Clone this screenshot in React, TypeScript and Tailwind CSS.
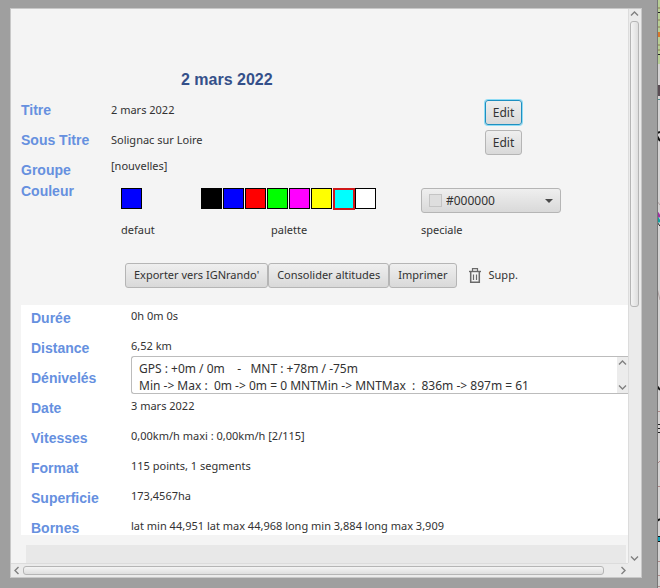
import React, { useState } from "react";

const PALETTE = ["#000000", "#0000ff", "#ff0000", "#00ff00", "#ff00ff", "#ffff00", "#00ffff", "#ffffff"];

const BUTTON =
  "h-[25px] rounded-[3px] border border-[#b5b5b5] bg-gradient-to-b from-[#efefef] to-[#d9d9d9] whitespace-nowrap";

const STATS = [
  { label: "Durée", value: "0h 0m 0s" },
  { label: "Distance", value: "6,52 km" },
  { label: "Dénivelés", value: "" },
  { label: "Date", value: "3 mars 2022" },
  { label: "Vitesses", value: "0,00km/h maxi : 0,00km/h [2/115]" },
  { label: "Format", value: "115 points, 1 segments" },
  { label: "Superficie", value: "173,4567ha" },
  { label: "Bornes", value: "lat min 44,951 lat max 44,968 long min 3,884 long max 3,909" },
];

const DENIVELES =
  "GPS : +0m / 0m    -   MNT : +78m / -75m\nMin -> Max :  0m -> 0m = 0 MNTMin -> MNTMax  :  836m -> 897m = 61";

function Chevron({ d }: { d: string }) {
  return (
    <svg width="9" height="9" viewBox="0 0 9 9" fill="none" stroke="#808080" strokeWidth="1.4">
      <path d={d} />
    </svg>
  );
}

const UP = "M1 6.5L4.5 3L8 6.5";
const DOWN = "M1 2.5L4.5 6L8 2.5";
const LEFT = "M6.5 1L3 4.5L6.5 8";
const RIGHT = "M2.5 1L6 4.5L2.5 8";

function FieldLabel({ children, htmlFor }: { children: React.ReactNode; htmlFor?: string }) {
  const cls = "block font-['Liberation_Sans',sans-serif] text-sm leading-5 font-bold text-[#6690df]";
  return htmlFor ? (
    <label htmlFor={htmlFor} className={cls}>{children}</label>
  ) : (
    <span className={cls}>{children}</span>
  );
}

function TrashIcon() {
  return (
    <svg width="12" height="16" viewBox="0 0 12 16" fill="none" stroke="#6a6a6a">
      <path d="M0 3.5H12" strokeWidth="1.4" />
      <path d="M3.5 3V0.7H8.5V3" strokeWidth="1.2" />
      <path d="M1.7 4V14.3H10.3V4" strokeWidth="1.5" />
      <path d="M4.5 6.5V12M7.5 6.5V12" strokeWidth="1.2" />
    </svg>
  );
}

// Sliver of the map left visible beside the panel
function MapEdge() {
  return (
    <svg width="3" height="588" viewBox="0 0 3 588" className="shrink-0 bg-[#d6d3d3]">
      <rect width="3" height="64" fill="#b9cf96" />
      <path d="M0 8H3M0 20H3M0 27H3M0 45H3M0 50H3" stroke="#8a7a50" />
      <rect y="32" width="3" height="5" fill="#d9762c" />
      <path d="M0 12.5H3M0 54.5H3" stroke="#222" />
      <rect y="85" width="3" height="11" fill="#5a4c54" />
      <path d="M0 99.5H3" stroke="#4f8f90" />
      <path d="M0 133L3 132M0 136L3 141" stroke="#111" strokeWidth="2" />
      <path d="M0 201L3 205M0 288L3 300" stroke="#b0a0a0" />
      <path d="M0 213L3 217" stroke="#a030a0" strokeWidth="3" />
      <path d="M0 218L3 222" stroke="#10a0a0" strokeWidth="3" />
      <path d="M0 222L3 226" stroke="#222" />
      <path d="M0 386L3 390" stroke="#111" strokeWidth="2" />
      <path d="M0 424.5H3M0 428.5H3M0 432.5H3" stroke="#222" />
      <path d="M0 464L3 461M0 486.5H3M0 411.5H3M0 561.5H3M0 575.5H3M0 586.5H3" stroke="#b08a8a" />
      <path d="M0 521L3 519" stroke="#111" strokeWidth="2" />
      <rect y="536" width="3" height="6" fill="#111" />
      <rect y="537" width="3" height="4" fill="#10a0b8" />
      <path d="M0.5 0V588" stroke="#777" />
    </svg>
  );
}

export default function App() {
  const [color, setColor] = useState("#00ffff");

  return (
    <div className="flex h-screen overflow-hidden bg-[#9f9f9f] font-['Noto_Sans',sans-serif] text-[11px] text-[#323232]">
      <div className="mt-2 mr-[15px] mb-2.5 ml-2.5 grid min-w-0 flex-1 grid-cols-[minmax(0,1fr)_13px] grid-rows-[minmax(0,1fr)_14px] border border-[#c8c8c8] bg-[#f4f4f4]">
        <main className="flex flex-col overflow-hidden pl-2.5">
          <h1 className="pt-[61px] pl-40 font-['Liberation_Sans',sans-serif] text-base leading-5 font-bold text-[#34508a]">
            2 mars 2022
          </h1>

          <section className="grid grid-cols-[90px_374px_37px] justify-start pt-[5px]">
            <div className="py-[5px]"><FieldLabel>Titre</FieldLabel></div>
            <div className="py-[5px] leading-5">2 mars 2022</div>
            <button className="mt-[5px] h-[25px] rounded-[3px] border border-[#1f8fc0] bg-gradient-to-b from-[#efefef] to-[#d9d9d9] text-xs ring-1 ring-[#8fdcf5]">
              Edit
            </button>
            <div className="py-[5px]"><FieldLabel>Sous Titre</FieldLabel></div>
            <div className="py-[5px] leading-5">Solignac sur Loire</div>
            <button className={`mt-[5px] text-xs ${BUTTON}`}>Edit</button>
            <div className="pt-[5px]"><FieldLabel>Groupe</FieldLabel></div>
            <div className="leading-[22px]">[nouvelles]</div>
          </section>

          <section className="flex pt-px">
            <div className="w-[100px] shrink-0"><FieldLabel>Couleur</FieldLabel></div>
            <div className="w-20 shrink-0 pt-[7px]">
              <button aria-label="defaut" className="block size-[21px] border border-black bg-[#0000ff]" />
              <div className="pt-[11px] leading-5">defaut</div>
            </div>
            <div className="w-[220px] shrink-0 pt-[7px]">
              <div className="flex h-[21px] gap-px">
                {PALETTE.map((c) => (
                  <button
                    key={c}
                    aria-label={c}
                    onClick={() => setColor(c)}
                    style={{ backgroundColor: c }}
                    className={c === color ? "-mr-px size-[22px] border-2 border-[#d01818]" : "size-[21px] border border-black"}
                  />
                ))}
              </div>
              <div className="pt-[11px] pl-[70px] leading-5">palette</div>
            </div>
            <div className="pt-[7px]">
              <div className="relative">
                <select
                  id="speciale"
                  className="block h-[25px] w-[140px] appearance-none rounded-[3px] border border-[#b5b5b5] bg-gradient-to-b from-[#efefef] to-[#d9d9d9] pl-6 text-xs"
                >
                  <option>#000000</option>
                </select>
                <span className="pointer-events-none absolute top-1.5 left-2 size-[13px] border border-[#c4c4c4] bg-[#dedede]" />
                <svg width="8" height="4" viewBox="0 0 8 4" className="pointer-events-none absolute top-[11px] right-2">
                  <path d="M0 0H8L4 4Z" fill="#4a4a4a" />
                </svg>
              </div>
              <label htmlFor="speciale" className="block pt-[7px] leading-5">speciale</label>
            </div>
          </section>

          <section className="flex items-center pt-[23px] pl-[104px]">
            <button className={`px-2 ${BUTTON}`}>Exporter vers IGNrando'</button>
            <button className={`px-2 ${BUTTON}`}>Consolider altitudes</button>
            <button className={`px-2 ${BUTTON}`}>Imprimer</button>
            <button className="flex h-[25px] items-center gap-2 pl-3">
              <TrashIcon />
              Supp.
            </button>
          </section>

          <section className="mt-[17px] bg-white pl-2.5">
            {STATS.map((s) => (
              <div key={s.label} className="flex h-[30px] last:h-5">
                <div className="w-[100px] shrink-0 pt-[3px]">
                  <FieldLabel htmlFor={s.value ? undefined : "deniveles"}>{s.label}</FieldLabel>
                </div>
                {s.value ? (
                  <div className="pt-px leading-5 whitespace-nowrap">{s.value}</div>
                ) : (
                  <div className="-mt-[9px] flex h-[38px] min-w-0 flex-1 rounded-l-[3px] border border-r-0 border-[#bcbcbc] bg-white">
                    <textarea
                      id="deniveles"
                      readOnly
                      defaultValue={DENIVELES}
                      className="min-w-0 flex-1 resize-none overflow-hidden pt-[3px] pl-[7px] text-xs leading-[17px] whitespace-pre outline-none"
                    />
                    <div className="flex w-[11px] flex-col items-center justify-between bg-[#ececec] py-px">
                      <Chevron d={UP} />
                      <Chevron d={DOWN} />
                    </div>
                  </div>
                )}
              </div>
            ))}
          </section>

          <div className="mt-2.5 mr-0.5 ml-[5px] min-h-0 flex-1 bg-[#e8e8e8]" />
        </main>

        <div className="flex flex-col items-center border-l border-[#dcdcdc] bg-[#ebebeb] pr-0.5">
          <Chevron d={UP} />
          <div className="mt-[3px] h-[286px] w-[9px] rounded-[3px] border border-[#b5b5b5] bg-gradient-to-r from-[#f4f4f4] to-[#dedede]" />
          <div className="mt-auto"><Chevron d={DOWN} /></div>
        </div>
        <div className="flex items-center border-t border-[#dcdcdc] bg-[#ebebeb] pl-px">
          <Chevron d={LEFT} />
          <div className="mr-[15px] ml-0.5 h-[9px] flex-1 rounded-[3px] border border-[#b5b5b5] bg-gradient-to-b from-[#f4f4f4] to-[#dedede]" />
          <Chevron d={RIGHT} />
        </div>
        <div className="bg-[#ebebeb]" />
      </div>
      <MapEdge />
    </div>
  );
}
